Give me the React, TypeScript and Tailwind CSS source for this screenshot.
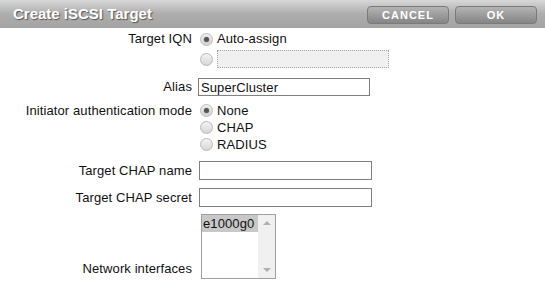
import React from "react";

function Radio({ checked }: { checked?: boolean }) {
  return (
    <span className="flex h-[13px] w-[13px] shrink-0 items-center justify-center rounded-full border border-[#b9b9b9] bg-gradient-to-b from-[#f4f4f4] to-[#d6d6d6]">
      {checked && <span className="h-[5px] w-[5px] rounded-full bg-[#555] shadow-[0_0_2px_#888]" />}
    </span>
  );
}

function Row({
  label,
  labelClass = "",
  children,
  className = "",
}: {
  label: string;
  labelClass?: string;
  children: React.ReactNode;
  className?: string;
}) {
  return (
    <div className={`flex ${className}`}>
      <div className={`w-[192px] shrink-0 text-right ${labelClass}`}>{label}</div>
      <div className="ml-[6px] flex flex-col">{children}</div>
    </div>
  );
}

export default function App() {
  return (
    <div className="h-[286px] w-[545px] overflow-hidden bg-white font-['Liberation_Sans',Arial,sans-serif] text-[13px] tracking-[0.1px] text-[#111]">
      <div className="flex h-[28px] items-center justify-between bg-gradient-to-b from-[#d8d8d8] via-[#adadad] to-[#a4a4a4] pl-[13px] pr-[8px]">
        <span className="text-[15px] font-bold tracking-normal text-white [text-shadow:1px_1px_1px_#555]">
          Create iSCSI Target
        </span>
        <div className="flex gap-[6px] pt-[2px]">
          <button className="flex h-[18px] w-[82px] items-center justify-center rounded-[4px] border border-[#7a7a7a] bg-gradient-to-b from-[#b4b4b4] to-[#858585] text-[11px] font-bold tracking-[1px] text-white">
            CANCEL
          </button>
          <button className="flex h-[18px] w-[82px] items-center justify-center rounded-[4px] border border-[#7a7a7a] bg-gradient-to-b from-[#b4b4b4] to-[#858585] text-[11px] font-bold tracking-[1px] text-white">
            OK
          </button>
        </div>
      </div>

      <Row label="Target IQN" labelClass="leading-[16px]" className="mt-[3px]">
        <div className="flex h-[16px] items-center gap-[4px] pl-[2px]">
          <Radio checked />
          <span>Auto-assign</span>
        </div>
        <div className="mt-[3px] flex h-[18px] items-center gap-[4px] pl-[2px]">
          <Radio />
          <div className="h-[18px] w-[172px] border border-dotted border-[#a8a8a8] bg-[#f0f0f1]" />
        </div>
      </Row>

      <Row label="Alias" labelClass="leading-[18px]" className="mt-[10px]">
        <div className="flex h-[18px] w-[172px] items-center border border-[#808080] px-[2px] leading-none">
          SuperCluster
        </div>
      </Row>

      <Row
        label="Initiator authentication mode"
        labelClass="leading-[17px]"
        className="mt-[6px]"
      >
        {["None", "CHAP", "RADIUS"].map((o, i) => (
          <div key={o} className="flex h-[17px] items-center gap-[4px] pl-[2px]">
            <Radio checked={i === 0} />
            <span>{o}</span>
          </div>
        ))}
      </Row>

      <Row label="Target CHAP name" labelClass="leading-[19px]" className="mt-[8px]">
        <div className="ml-[1px] h-[19px] w-[173px] border border-[#808080]" />
      </Row>

      <Row label="Target CHAP secret" labelClass="leading-[19px]" className="mt-[8px]">
        <div className="ml-[1px] h-[19px] w-[173px] border border-[#808080]" />
      </Row>

      <Row
        label="Network interfaces"
        labelClass="self-end pb-[2px] leading-[16px]"
        className="mt-[7px]"
      >
        <div className="ml-[3px] flex h-[65px] w-[75px] border border-[#a0a0a0]">
          <div className="flex-1">
            <div className="h-[17px] bg-[#c8c8c8] pl-[1px] leading-[17px]">e1000g0</div>
          </div>
          <div className="flex w-[17px] flex-col items-center justify-between bg-[#f0f0f0] py-[6px]">
            <span className="h-0 w-0 border-x-[4px] border-b-[4px] border-x-transparent border-b-[#b0b0b0]" />
            <span className="h-0 w-0 border-x-[4px] border-t-[4px] border-x-transparent border-t-[#b0b0b0]" />
          </div>
        </div>
      </Row>
    </div>
  );
}
